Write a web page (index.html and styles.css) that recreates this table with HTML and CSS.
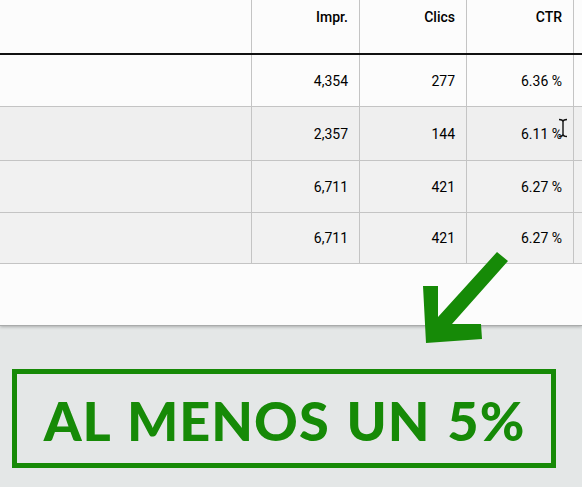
FILE: index.html
```html
<!DOCTYPE html>
<html>
<head>
<meta charset="utf-8">
<link rel="stylesheet" href="styles.css">
</head>
<body>
<div class="page">
  <div class="sheet">
    <div class="row head">
      <div class="cell first"></div>
      <div class="cell">Impr.</div>
      <div class="cell">Clics</div>
      <div class="cell">CTR</div>
      <div class="cell last"></div>
    </div>
    <div class="row r1">
      <div class="cell first"></div>
      <div class="cell">4,354</div>
      <div class="cell">277</div>
      <div class="cell">6.36 %</div>
      <div class="cell last"></div>
    </div>
    <div class="row r2">
      <div class="cell first"></div>
      <div class="cell">2,357</div>
      <div class="cell">144</div>
      <div class="cell ctr">6.11 %<svg class="ibeam" width="10" height="20" viewBox="0 0 10 20"><path d="M1 1.5 C3 1.5 5 2 5 4 L5 16 C5 18 3 18.5 1 18.5 M9 1.5 C7 1.5 5 2 5 4 M5 16 C5 18 7 18.5 9 18.5" fill="none" stroke="#111" stroke-width="1.4"/></svg></div>
      <div class="cell last"></div>
    </div>
    <div class="row r3">
      <div class="cell first"></div>
      <div class="cell">6,711</div>
      <div class="cell">421</div>
      <div class="cell">6.27 %</div>
      <div class="cell last"></div>
    </div>
    <div class="row r4">
      <div class="cell first"></div>
      <div class="cell">6,711</div>
      <div class="cell">421</div>
      <div class="cell">6.27 %</div>
      <div class="cell last"></div>
    </div>
    <div class="blank"></div>
  </div>
  <div class="banner">AL MENOS UN 5%</div>
  <svg class="arrow" width="92" height="96" viewBox="0 0 92 96">
    <path d="M77 2 L88 11 L32 74 L61 74 L62 89 L6 93 L3 36 L18 36 L18 67 Z" fill="#168a07"/>
  </svg>
</div>
</body>
</html>
```
FILE: styles.css
```css
* { box-sizing: border-box; }
html, body { margin: 0; padding: 0; }
body {
  background: #e4e7e7;
  font-family: Roboto, "Liberation Sans", sans-serif;
  width: 582px;
  height: 487px;
  overflow: hidden;
}
.page { position: relative; width: 582px; height: 487px; }
.sheet {
  background: #fcfcfc;
  border-bottom: 1px solid #a9abab;
  box-shadow: 0 1px 3px rgba(0,0,0,0.25);
}
.row {
  display: grid;
  grid-template-columns: 251px 108px 107px 107px 9px;
  border-bottom: 1px solid #c4c4c4;
}
.row.head { height: 55px; border-bottom: 2px solid #111; }
.row.head .cell { padding-top: 9px; align-items: flex-start; font-weight: 500; }
.r1 { height: 52px; background: #fcfcfc; }
.r2 { height: 54px; background: #efefef; }
.r3 { height: 52px; background: #f1f1f1; }
.r4 { height: 51px; background: #f1f1f1; }
.cell {
  border-left: 1px solid #c4c4c4;
  display: flex;
  align-items: center;
  justify-content: flex-end;
  padding-right: 11px;
  font-size: 14px;
  color: #000;
  font-weight: 400;
  position: relative;
}
.cell.first { border-left: none; }
.ibeam { position: absolute; right: 5px; top: 11px; }
.blank { height: 61px; background: #fcfcfc; }
.banner {
  margin: 43px 0 0 12px;
  width: 544px;
  height: 99px;
  border: 5px solid #168a07;
  color: #168a07;
  font-family: Lato, "Noto Sans", sans-serif;
  font-weight: 900;
  font-size: 54px;
  letter-spacing: 1px;
  word-spacing: 3px;
  display: flex;
  align-items: center;
  justify-content: center;
  padding-top: 4px;
  padding-left: 1px;
}
.arrow { position: absolute; left: 420px; top: 250px; }
```
